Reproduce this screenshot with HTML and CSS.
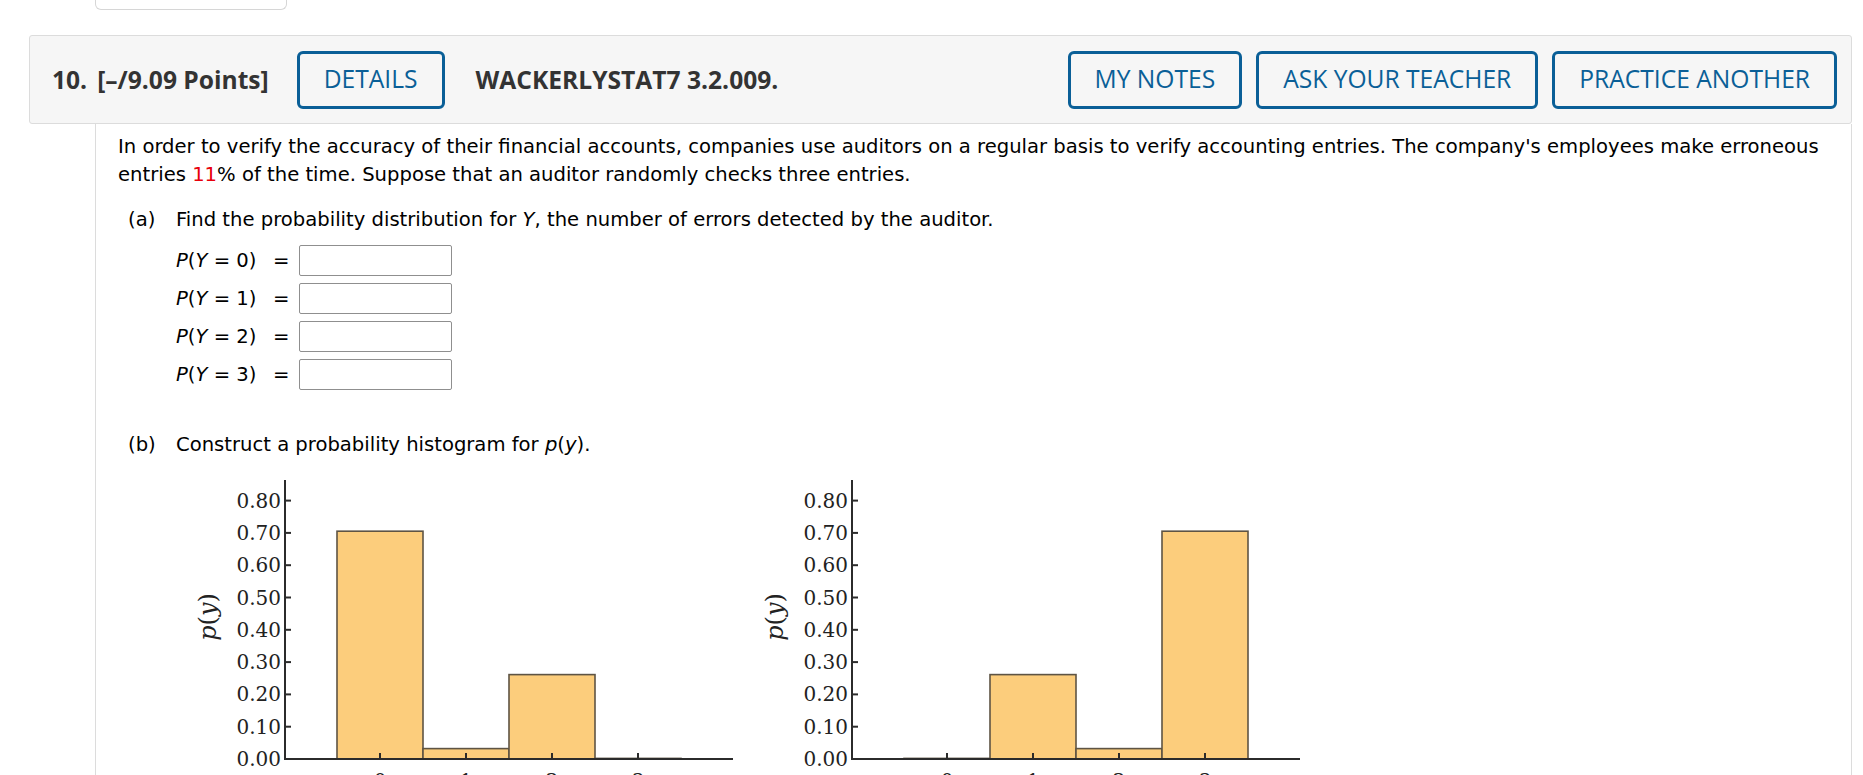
FILE: index.html
```html
<!DOCTYPE html>
<html lang="en">
<head>
<meta charset="utf-8">
<title>Question 10</title>
<link rel="stylesheet" href="styles.css">
</head>
<body>
<div class="topbox"></div>
<div class="question">
  <div class="qhead">
    <span class="qnum">10.</span>
    <span class="qpoints">[–/9.09 Points]</span>
    <button class="btn">DETAILS</button>
    <span class="qcode">WACKERLYSTAT7 3.2.009.</span>
    <span class="spacer"></span>
    <div class="actions">
      <button class="btn">MY NOTES</button>
      <button class="btn">ASK YOUR TEACHER</button>
      <button class="btn">PRACTICE ANOTHER</button>
    </div>
  </div>
  <div class="qbody">
    <p class="intro">In order to verify the accuracy of their financial accounts, companies use auditors on a regular basis to verify accounting entries. The company's employees make erroneous entries <span class="red">11</span>% of the time. Suppose that an auditor randomly checks three entries.</p>
    <div class="part part-a">
      <span class="plabel">(a)</span>
      <div class="pcontent">
        <div class="ptext">Find the probability distribution for <i>Y</i>, the number of errors detected by the auditor.</div>
        <div class="rows">
          <div class="row"><span class="expr"><i>P</i>(<i>Y</i> = 0)</span><span class="eq">=</span><span class="inp"></span></div>
          <div class="row"><span class="expr"><i>P</i>(<i>Y</i> = 1)</span><span class="eq">=</span><span class="inp"></span></div>
          <div class="row"><span class="expr"><i>P</i>(<i>Y</i> = 2)</span><span class="eq">=</span><span class="inp"></span></div>
          <div class="row"><span class="expr"><i>P</i>(<i>Y</i> = 3)</span><span class="eq">=</span><span class="inp"></span></div>
        </div>
      </div>
    </div>
    <div class="part part-b">
      <span class="plabel">(b)</span>
      <div class="pcontent">
        <div class="ptext">Construct a probability histogram for <i>p</i>(<i>y</i>).</div>
      </div>
    </div>
    <div class="charts">
      <svg class="chart" width="550" height="330" viewBox="0 0 550 330">
        <text class="ylab" transform="translate(26,147) rotate(-90)" text-anchor="middle"><tspan font-style="italic">p</tspan>(<tspan font-style="italic">y</tspan>)</text>
        <g class="bars">
          <rect x="147" y="61.2" width="86" height="227.8"/>
          <rect x="233" y="278.6" width="86" height="10.4"/>
          <rect x="319" y="204.6" width="86" height="84.4"/>
          <rect x="405" y="288.4" width="86" height="0.6"/>
        </g>
        <g class="axis">
          <line x1="95" y1="10" x2="95" y2="290"/>
          <line x1="94" y1="289" x2="543" y2="289"/>
          <line x1="95" y1="30.6" x2="101" y2="30.6"/>
          <line x1="95" y1="62.9" x2="101" y2="62.9"/>
          <line x1="95" y1="95.2" x2="101" y2="95.2"/>
          <line x1="95" y1="127.5" x2="101" y2="127.5"/>
          <line x1="95" y1="159.8" x2="101" y2="159.8"/>
          <line x1="95" y1="192.1" x2="101" y2="192.1"/>
          <line x1="95" y1="224.4" x2="101" y2="224.4"/>
          <line x1="95" y1="256.7" x2="101" y2="256.7"/>
          <line x1="190" y1="289" x2="190" y2="283"/>
          <line x1="276" y1="289" x2="276" y2="283"/>
          <line x1="362" y1="289" x2="362" y2="283"/>
          <line x1="448" y1="289" x2="448" y2="283"/>
        </g>
        <g class="ticks" text-anchor="end">
          <text x="91" y="37.6">0.80</text>
          <text x="91" y="69.9">0.70</text>
          <text x="91" y="102.2">0.60</text>
          <text x="91" y="134.5">0.50</text>
          <text x="91" y="166.8">0.40</text>
          <text x="91" y="199.1">0.30</text>
          <text x="91" y="231.4">0.20</text>
          <text x="91" y="263.7">0.10</text>
          <text x="91" y="296">0.00</text>
        </g>
        <g class="ticks" text-anchor="middle">
          <text x="190" y="318">0</text>
          <text x="276" y="318">1</text>
          <text x="362" y="318">2</text>
          <text x="448" y="318">3</text>
        </g>
      </svg>
      <svg class="chart" width="550" height="330" viewBox="0 0 550 330">
        <text class="ylab" transform="translate(26,147) rotate(-90)" text-anchor="middle"><tspan font-style="italic">p</tspan>(<tspan font-style="italic">y</tspan>)</text>
        <g class="bars">
          <rect x="147" y="288.4" width="86" height="0.6"/>
          <rect x="233" y="204.6" width="86" height="84.4"/>
          <rect x="319" y="278.6" width="86" height="10.4"/>
          <rect x="405" y="61.2" width="86" height="227.8"/>
        </g>
        <g class="axis">
          <line x1="95" y1="10" x2="95" y2="290"/>
          <line x1="94" y1="289" x2="543" y2="289"/>
          <line x1="95" y1="30.6" x2="101" y2="30.6"/>
          <line x1="95" y1="62.9" x2="101" y2="62.9"/>
          <line x1="95" y1="95.2" x2="101" y2="95.2"/>
          <line x1="95" y1="127.5" x2="101" y2="127.5"/>
          <line x1="95" y1="159.8" x2="101" y2="159.8"/>
          <line x1="95" y1="192.1" x2="101" y2="192.1"/>
          <line x1="95" y1="224.4" x2="101" y2="224.4"/>
          <line x1="95" y1="256.7" x2="101" y2="256.7"/>
          <line x1="190" y1="289" x2="190" y2="283"/>
          <line x1="276" y1="289" x2="276" y2="283"/>
          <line x1="362" y1="289" x2="362" y2="283"/>
          <line x1="448" y1="289" x2="448" y2="283"/>
        </g>
        <g class="ticks" text-anchor="end">
          <text x="91" y="37.6">0.80</text>
          <text x="91" y="69.9">0.70</text>
          <text x="91" y="102.2">0.60</text>
          <text x="91" y="134.5">0.50</text>
          <text x="91" y="166.8">0.40</text>
          <text x="91" y="199.1">0.30</text>
          <text x="91" y="231.4">0.20</text>
          <text x="91" y="263.7">0.10</text>
          <text x="91" y="296">0.00</text>
        </g>
        <g class="ticks" text-anchor="middle">
          <text x="190" y="318">0</text>
          <text x="276" y="318">1</text>
          <text x="362" y="318">2</text>
          <text x="448" y="318">3</text>
        </g>
      </svg>
    </div>
  </div>
</div>
</body>
</html>
```
FILE: styles.css
```css
* { box-sizing: border-box; }
html, body { margin: 0; padding: 0; background: #fff; }
body { font-family: "DejaVu Sans", Verdana, sans-serif; color: #000; overflow: hidden; }

.topbox {
  margin-left: 95px;
  width: 192px;
  height: 10px;
  border: 1px solid #d6d6d6;
  border-top: none;
  border-radius: 0 0 6px 6px;
}

.question { margin-top: 25px; margin-left: 29px; width: 1823px; }

.qhead {
  height: 89px;
  background: #f6f6f6;
  border: 1px solid #dcdcdc;
  border-radius: 3px;
  display: flex;
  align-items: center;
  padding: 0 14px 0 22px;
  font-family: "Open Sans", sans-serif;
  font-size: 24.6px;
  color: #333;
}
.qnum { font-weight: 700; margin-right: 10px; }
.qpoints { font-weight: 700; margin-right: 28px; }
.qcode { font-weight: 700; margin-left: 31px; }
.spacer { flex: 1; }
.actions { display: flex; gap: 14px; }

.btn {
  height: 58px;
  padding: 0 24px;
  border: 3px solid #0a5f97;
  border-radius: 6px;
  background: transparent;
  color: #0a5f97;
  font-family: "Open Sans", sans-serif;
  font-size: 24.6px;
  font-weight: 400;
  line-height: 1;
  white-space: nowrap;
}

.qbody {
  margin-left: 66px;
  border-left: 1px solid #dcdcdc;
  border-right: 1px solid #dcdcdc;
  padding: 9px 20px 0 22px;
  font-size: 19.6px;
}
.intro { margin: 0; line-height: 28px; }
.red { color: #e8000b; }

.part { display: flex; }
.part-a { margin-top: 17px; }
.part-b { margin-top: 38px; }
.plabel { width: 58px; padding-left: 10px; line-height: 28px; }
.pcontent { flex: 1; }
.ptext { line-height: 28px; }

.rows { margin-top: 7px; display: flex; flex-direction: column; }
.row { display: flex; align-items: center; height: 38px; }
.expr { width: 97px; white-space: nowrap; }
.eq { width: 26px; }
.inp {
  display: block;
  width: 153px;
  height: 31px;
  border: 1px solid #8f8f8f;
  border-radius: 2px;
  background: #fff;
}

.charts { display: flex; gap: 17px; margin-top: 11px; margin-left: 72px; }
.chart { display: block; flex: none; }
.bars rect { fill: #fccd7c; stroke: #5e5444; stroke-width: 1.6; }
.axis line { stroke: #2b2b2b; stroke-width: 2; }
.ticks text { font-family: "DejaVu Serif", serif; font-size: 20px; fill: #222; }
.ylab { font-family: "DejaVu Serif", serif; font-size: 24px; fill: #222; }
```
